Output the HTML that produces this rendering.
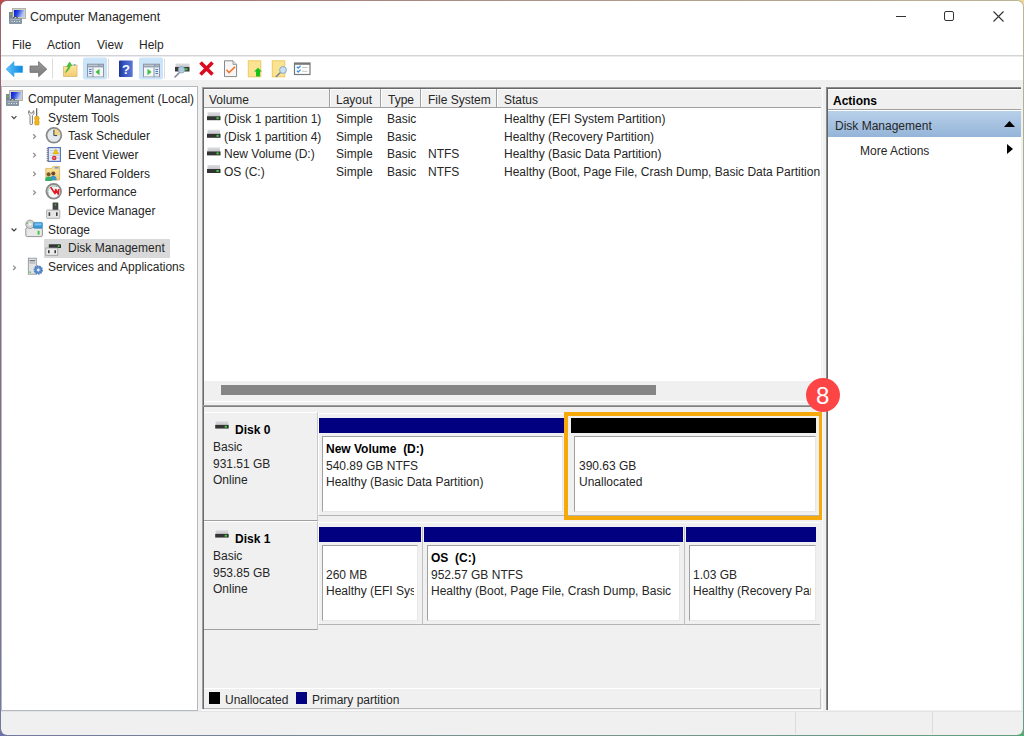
<!DOCTYPE html>
<html><head><meta charset="utf-8">
<style>
*{margin:0;padding:0;box-sizing:border-box}
html,body{width:1024px;height:736px;overflow:hidden}
body{position:relative;font-family:"Liberation Sans",sans-serif;font-size:12px;color:#262626;background:linear-gradient(to right,#c04848,#d0a080 50%,#f0d898)}
#bgr{position:absolute;left:0;top:0;width:1024px;height:736px;background:linear-gradient(to right,#7070a8,#80a088 50%,#50b070);-webkit-mask-image:linear-gradient(to bottom,transparent,#000);mask-image:linear-gradient(to bottom,transparent,#000)}
#win{position:absolute;left:0;top:0;width:1024px;height:736px;border-radius:7px;border:1px solid rgba(120,130,150,0.42);background:#f0f0f0;background-clip:padding-box}
.a{position:absolute;white-space:nowrap;line-height:14px}
.r{position:absolute}
.b{font-weight:bold;color:#000}
svg{position:absolute;overflow:visible}
</style></head><body>
<div id="bgr"></div>
<div id="win"></div>
<!-- title + menu -->
<div class="r" style="left:1px;top:1px;width:1022px;height:54px;background:#fff;border-radius:6px 6px 0 0"></div>
<div class="r" style="left:1px;top:55px;width:1022px;height:1px;background:#d4d4d8"></div>
<div class="r" style="left:1px;top:56px;width:1022px;height:1px;background:#ebebed"></div>
<div class="r" style="left:1px;top:57px;width:1022px;height:23px;background:#fff"></div>
<div class="a" style="left:30px;top:10px;font-size:12.4px">Computer Management</div>
<div class="a" style="left:12px;top:38px">File</div>
<div class="a" style="left:47px;top:38px">Action</div>
<div class="a" style="left:97px;top:38px">View</div>
<div class="a" style="left:139px;top:38px">Help</div>
<!-- window controls -->
<div class="r" style="left:896px;top:16px;width:10px;height:1px;background:#333"></div>
<div class="r" style="left:944px;top:11px;width:10px;height:10px;border:1px solid #333;border-radius:2px"></div>
<svg style="left:993px;top:11px" width="11" height="11"><path d="M0.5 0.5L10.5 10.5M10.5 0.5L0.5 10.5" stroke="#333" stroke-width="1.1"/></svg>

<!-- left pane -->
<div class="r" style="left:1px;top:86px;width:197px;height:625px;background:#fff;border:1px solid #b4b9c0"></div>
<div class="a" style="left:28px;top:92px">Computer Management (Local)</div>
<div class="a" style="left:48px;top:111px">System Tools</div>
<div class="a" style="left:68px;top:129px">Task Scheduler</div>
<div class="a" style="left:68px;top:148px">Event Viewer</div>
<div class="a" style="left:68px;top:167px">Shared Folders</div>
<div class="a" style="left:68px;top:185px">Performance</div>
<div class="a" style="left:68px;top:204px">Device Manager</div>
<div class="a" style="left:48px;top:223px">Storage</div>
<div class="r" style="left:44px;top:239px;width:126px;height:19px;background:#d9d9d9"></div>
<div class="a" style="left:68px;top:241px">Disk Management</div>
<div class="a" style="left:48px;top:260px">Services and Applications</div>

<!-- center list view -->
<div class="r" style="left:202px;top:87px;width:619px;height:622px;border-left:1px solid #a0a0a0;border-top:1px solid #a0a0a0"></div>
<div class="r" style="left:203px;top:88px;width:618px;height:621px;border-left:1px solid #696969;border-top:1px solid #696969;background:#fff"></div>
<!-- header -->
<div class="r" style="left:204px;top:89px;width:617px;height:19px;background:#f0f0f0;border-bottom:1px solid #a0a0a0"></div>
<div class="r" style="left:204px;top:89px;width:617px;height:1px;background:#fff"></div>
<div class="r" style="left:329px;top:89px;width:1px;height:18px;background:#a0a0a0"></div>
<div class="r" style="left:330px;top:89px;width:1px;height:18px;background:#fff"></div>
<div class="r" style="left:380px;top:89px;width:1px;height:18px;background:#a0a0a0"></div>
<div class="r" style="left:381px;top:89px;width:1px;height:18px;background:#fff"></div>
<div class="r" style="left:420px;top:89px;width:1px;height:18px;background:#a0a0a0"></div>
<div class="r" style="left:421px;top:89px;width:1px;height:18px;background:#fff"></div>
<div class="r" style="left:496px;top:89px;width:1px;height:18px;background:#a0a0a0"></div>
<div class="r" style="left:497px;top:89px;width:1px;height:18px;background:#fff"></div>
<div class="a" style="left:209px;top:93px">Volume</div>
<div class="a" style="left:336px;top:93px">Layout</div>
<div class="a" style="left:388px;top:93px">Type</div>
<div class="a" style="left:428px;top:93px">File System</div>
<div class="a" style="left:504px;top:93px">Status</div>
<!-- rows -->
<div class="a" style="left:224px;top:112px">(Disk 1 partition 1)</div>
<div class="a" style="left:224px;top:130px">(Disk 1 partition 4)</div>
<div class="a" style="left:224px;top:147px">New Volume (D:)</div>
<div class="a" style="left:224px;top:165px">OS (C:)</div>
<div class="a" style="left:336px;top:112px">Simple</div>
<div class="a" style="left:336px;top:130px">Simple</div>
<div class="a" style="left:336px;top:147px">Simple</div>
<div class="a" style="left:336px;top:165px">Simple</div>
<div class="a" style="left:387px;top:112px">Basic</div>
<div class="a" style="left:387px;top:130px">Basic</div>
<div class="a" style="left:387px;top:147px">Basic</div>
<div class="a" style="left:387px;top:165px">Basic</div>
<div class="a" style="left:428px;top:147px">NTFS</div>
<div class="a" style="left:428px;top:165px">NTFS</div>
<div class="a" style="left:504px;top:112px">Healthy (EFI System Partition)</div>
<div class="a" style="left:504px;top:130px">Healthy (Recovery Partition)</div>
<div class="a" style="left:504px;top:147px">Healthy (Basic Data Partition)</div>
<div class="r" style="left:504px;top:165px;width:316px;height:14px;overflow:hidden"><div class="a" style="left:0;top:0">Healthy (Boot, Page File, Crash Dump, Basic Data Partition)</div></div>
<!-- scrollbar -->
<div class="r" style="left:204px;top:381px;width:617px;height:20px;background:#f0f0f0"></div>
<div class="r" style="left:221px;top:385px;width:435px;height:10px;background:#858585"></div>
<!-- splitter -->
<div class="r" style="left:204px;top:401px;width:617px;height:4px;background:#f0f0f0;border-top:1px solid #fff"></div>
<div class="r" style="left:203px;top:405px;width:618px;height:1px;background:#a0a0a0"></div>
<div class="r" style="left:203px;top:406px;width:618px;height:1px;background:#808080"></div>
<div class="r" style="left:204px;top:407px;width:617px;height:302px;background:#f0f0f0"></div>


<!-- disk view -->
<!-- disk 0 label -->
<div class="r" style="left:204px;top:412px;width:114px;height:109px;background:#f0f0f0;border-top:1px solid #fff;border-right:1px solid #c8c8c8;border-bottom:1px solid #a0a0a0"></div>
<div class="a b" style="left:235px;top:423px">Disk 0</div>
<div class="a" style="left:213px;top:440px">Basic</div>
<div class="a" style="left:213px;top:457px">931.51 GB</div>
<div class="a" style="left:213px;top:473px">Online</div>
<!-- disk 0 partitions -->
<div class="r" style="left:318px;top:413px;width:502px;height:103px;background:#f0f0f0;border-top:1px solid #fff;border-left:1px solid #fff;border-bottom:1px solid #b4b4b4"></div>
<div class="r" style="left:319px;top:418px;width:246px;height:15px;background:#000080"></div>
<div class="r" style="left:322px;top:436px;width:241px;height:76px;background:#fff;border-left:1px solid #a0a0a0;border-top:1px solid #a0a0a0;border-right:1px solid #e8e8e8;border-bottom:1px solid #e8e8e8"></div>
<div class="a b" style="left:326px;top:442px">New Volume&nbsp; (D:)</div>
<div class="a" style="left:326px;top:459px">540.89 GB NTFS</div>
<div class="a" style="left:326px;top:475px">Healthy (Basic Data Partition)</div>
<div class="r" style="left:571px;top:418px;width:245px;height:15px;background:#000"></div>
<div class="r" style="left:574px;top:436px;width:242px;height:76px;background:#fff;border-left:1px solid #a0a0a0;border-top:1px solid #a0a0a0;border-right:1px solid #e8e8e8;border-bottom:1px solid #e8e8e8"></div>
<div class="a" style="left:579px;top:459px">390.63 GB</div>
<div class="a" style="left:579px;top:475px">Unallocated</div>
<div class="r" style="left:564px;top:412px;width:259px;height:108px;border:4px solid #f5a90a"></div>
<!-- disk 1 label -->
<div class="r" style="left:204px;top:521px;width:114px;height:109px;background:#f0f0f0;border-top:1px solid #fff;border-right:1px solid #c8c8c8;border-bottom:1px solid #a0a0a0"></div>
<div class="a b" style="left:235px;top:532px">Disk 1</div>
<div class="a" style="left:213px;top:549px">Basic</div>
<div class="a" style="left:213px;top:566px">953.85 GB</div>
<div class="a" style="left:213px;top:582px">Online</div>
<div class="r" style="left:318px;top:522px;width:502px;height:103px;background:#f0f0f0;border-top:1px solid #fff;border-left:1px solid #fff;border-bottom:1px solid #b4b4b4"></div>
<div class="r" style="left:319px;top:527px;width:102px;height:15px;background:#000080"></div>
<div class="r" style="left:322px;top:545px;width:96px;height:76px;background:#fff;border-left:1px solid #a0a0a0;border-top:1px solid #a0a0a0;border-right:1px solid #e8e8e8;border-bottom:1px solid #e8e8e8"></div>
<div class="r" style="left:326px;top:561px;width:88px;height:40px;overflow:hidden"><div class="a" style="left:0;top:7px">260 MB</div><div class="a" style="left:0;top:23px">Healthy (EFI System Partition)</div></div>
<div class="r" style="left:422px;top:527px;width:1px;height:98px;background:#c0c0c0"></div>
<div class="r" style="left:424px;top:527px;width:259px;height:15px;background:#000080"></div>
<div class="r" style="left:427px;top:545px;width:253px;height:76px;background:#fff;border-left:1px solid #a0a0a0;border-top:1px solid #a0a0a0;border-right:1px solid #e8e8e8;border-bottom:1px solid #e8e8e8"></div>
<div class="a b" style="left:431px;top:551px">OS&nbsp; (C:)</div>
<div class="a" style="left:431px;top:568px">952.57 GB NTFS</div>
<div class="r" style="left:431px;top:584px;width:242px;height:14px;overflow:hidden"><div class="a" style="left:0;top:0">Healthy (Boot, Page File, Crash Dump, Basic Data Partition)</div></div>
<div class="r" style="left:684px;top:527px;width:1px;height:98px;background:#c0c0c0"></div>
<div class="r" style="left:686px;top:527px;width:130px;height:15px;background:#000080"></div>
<div class="r" style="left:689px;top:545px;width:127px;height:76px;background:#fff;border-left:1px solid #a0a0a0;border-top:1px solid #a0a0a0;border-right:1px solid #e8e8e8;border-bottom:1px solid #e8e8e8"></div>
<div class="r" style="left:693px;top:561px;width:118px;height:40px;overflow:hidden"><div class="a" style="left:0;top:7px">1.03 GB</div><div class="a" style="left:0;top:23px">Healthy (Recovery Partition)</div></div>
<!-- legend -->
<div class="r" style="left:204px;top:688px;width:617px;height:21px;background:#f0f0f0;border-top:1px solid #fff;border-right:1px solid #c4c4c4;border-bottom:1px solid #b8b8b8"></div>
<div class="r" style="left:209px;top:692px;width:11px;height:12px;background:#000"></div>
<div class="a" style="left:225px;top:693px">Unallocated</div>
<div class="r" style="left:296px;top:692px;width:11px;height:12px;background:#000080"></div>
<div class="a" style="left:312px;top:693px">Primary partition</div>
<div class="r" style="left:822px;top:86px;width:1px;height:625px;background:#fafafa"></div>
<div class="r" style="left:201px;top:710px;width:622px;height:1px;background:#fafafa"></div>
<!-- actions pane -->
<div class="r" style="left:826px;top:87px;width:195px;height:623px;background:#fff;border-left:1px solid #8c8c8c;border-top:1px solid #8c8c8c;box-shadow:inset 1px 1px 0 #646464"></div>
<div class="r" style="left:828px;top:89px;width:193px;height:21px;background:#f0f0f0;border-top:1px solid #fff;border-bottom:1px solid #a0a0a0"></div>
<div class="r" style="left:828px;top:111px;width:193px;height:26px;background:linear-gradient(#b8d0ea,#94b4d8)"></div>
<div class="a b" style="left:833px;top:94px">Actions</div>
<div class="a" style="left:835px;top:119px">Disk Management</div>
<div class="a" style="left:860px;top:144px">More Actions</div>
<svg style="left:1004px;top:121px" width="11" height="6"><path d="M0 6L5.5 0L11 6Z" fill="#000"/></svg>
<svg style="left:1007px;top:144px" width="6" height="10"><path d="M0 0L6 5L0 10Z" fill="#000"/></svg>

<!-- status bar -->
<div class="r" style="left:1px;top:711px;width:1022px;height:1px;background:#e4e4e4"></div>
<div class="r" style="left:795px;top:712px;width:1px;height:22px;background:#dcdcdc"></div>
<div class="r" style="left:932px;top:712px;width:1px;height:22px;background:#dcdcdc"></div>
<!-- ICONS -->
<svg style="left:0;top:0;pointer-events:none" width="1024" height="736" viewBox="0 0 1024 736">
<defs>
<linearGradient id="scr" x1="0" y1="0" x2="1" y2="0.3"><stop offset="0" stop-color="#0818c8"/><stop offset="0.45" stop-color="#2a48e0"/><stop offset="1" stop-color="#b8c8f4"/></linearGradient>
<linearGradient id="blu" x1="0" y1="0" x2="1" y2="0"><stop offset="0" stop-color="#60c4fa"/><stop offset="1" stop-color="#0a86e0"/></linearGradient>
<linearGradient id="gry" x1="0" y1="0" x2="0" y2="1"><stop offset="0" stop-color="#9a9a9a"/><stop offset="1" stop-color="#7a7a7a"/></linearGradient>
<linearGradient id="hlp" x1="0" y1="0" x2="1" y2="0"><stop offset="0" stop-color="#1c3490"/><stop offset="0.25" stop-color="#2e4cb8"/><stop offset="1" stop-color="#5a7ad8"/></linearGradient>
<linearGradient id="fld" x1="0" y1="0" x2="0" y2="1"><stop offset="0" stop-color="#fde7a0"/><stop offset="1" stop-color="#f2cc70"/></linearGradient>
<linearGradient id="drv" x1="0" y1="0" x2="0" y2="1"><stop offset="0" stop-color="#dcdee2"/><stop offset="1" stop-color="#c4c6ca"/></linearGradient>
<g id="cmp">
 <rect x="3.5" y="0.5" width="13" height="10" fill="#cfcfc6" stroke="#b4b4aa"/>
 <rect x="5" y="2" width="10" height="7" fill="url(#scr)"/>
 <rect x="0" y="4" width="3.5" height="7" fill="#7c8690"/>
 <rect x="1" y="5.5" width="1.5" height="1.5" fill="#60d040"/>
 <rect x="0" y="10" width="13" height="6" rx="0.8" fill="#8696a4"/>
 <rect x="1.5" y="11" width="10" height="1" fill="#a8b4c0"/>
 <rect x="2.5" y="13" width="1" height="1" fill="#e8eef2"/><rect x="5" y="13" width="1" height="1" fill="#e8eef2"/><rect x="7.5" y="13" width="1" height="1" fill="#e8eef2"/><rect x="10" y="13" width="1" height="1" fill="#e8eef2"/>
 <path d="M4 10L6.5 8.5L9 10" fill="none" stroke="#404850" stroke-width="1"/>
</g>
<g id="drvi">
 <rect x="0.5" y="0" width="12.5" height="4" fill="url(#drv)"/>
 <rect x="0" y="4" width="13.5" height="4" fill="#333"/>
 <rect x="9.5" y="5" width="2.2" height="2" fill="#3ad43a"/>
</g>
<g id="wnd">
 <rect x="0" y="0" width="17" height="13.5" fill="#8a96a6"/>
 <rect x="1" y="1" width="10" height="1.2" fill="#c4ccd6"/>
 <rect x="12" y="1" width="4" height="1.2" fill="#aeb8c4"/>
 <rect x="1" y="3" width="15" height="1" fill="#b8c2cc"/>
</g>
</defs>

<!-- title icon -->
<use href="#cmp" x="9" y="8"/>

<!-- toolbar -->
<path d="M6 69.2L14 61.6V66H22.6V72.4H14V76.8Z" fill="url(#blu)" stroke="#3aa6ec" stroke-width="0.6" stroke-linejoin="round"/>
<path d="M46.8 69.2L38.6 61.6V66H30V72.4H38.6V76.8Z" fill="url(#gry)" stroke="#707070" stroke-width="0.8" stroke-linejoin="round"/>
<rect x="52" y="58.5" width="1" height="20" fill="#dcdcdc"/>
<!-- folder up -->
<path d="M63.5 66.5H70.5L72 65H77V76.5H63.5Z" fill="url(#fld)" stroke="#dab868" stroke-width="0.8"/>
<path d="M65.5 72.5C66.5 70 68 68.5 68.5 66.2L66.8 66.4L69.6 62L72 65.6L70.2 65.8C69.8 68.6 68 71 65.5 72.5Z" fill="#3cc83c" stroke="#28a828" stroke-width="0.5"/>
<circle cx="74.6" cy="65" r="1" fill="#78a8d8"/>
<rect x="83" y="57.5" width="24" height="22" rx="2" fill="#cce4f7"/>
<use href="#wnd" x="87" y="63.7"/>
<rect x="88" y="67.5" width="4.5" height="9" fill="#e4eaf0"/>
<rect x="89" y="69" width="2.5" height="1" fill="#4a7ac8"/><rect x="89" y="71" width="2.5" height="1" fill="#4a7ac8"/><rect x="89" y="73" width="2.5" height="1" fill="#4a7ac8"/>
<rect x="93.5" y="67.5" width="9.5" height="9" fill="#f4f6f8"/>
<path d="M95.5 72L99.5 68.8V75.2Z" fill="#3cbf3c"/>
<rect x="108" y="58.5" width="1" height="20" fill="#dcdcdc"/>
<!-- help -->
<rect x="119" y="60.5" width="13.7" height="16.5" rx="0.8" fill="url(#hlp)"/>
<text x="126" y="74.2" font-family="Liberation Sans" font-weight="bold" font-size="13" fill="#fff" text-anchor="middle">?</text>
<rect x="139" y="57.5" width="24" height="22" rx="2" fill="#cce4f7"/>
<use href="#wnd" x="143" y="63.7"/>
<rect x="144" y="67.5" width="9.5" height="9" fill="#f4f6f8"/>
<path d="M147.5 68.8L151.5 72L147.5 75.2Z" fill="#3cbf3c"/>
<rect x="154.5" y="67.5" width="4.5" height="9" fill="#e4eaf0"/>
<rect x="155.5" y="69" width="2.5" height="1" fill="#4a7ac8"/><rect x="155.5" y="71" width="2.5" height="1" fill="#4a7ac8"/><rect x="155.5" y="73" width="2.5" height="1" fill="#4a7ac8"/>
<rect x="164" y="58.5" width="1" height="20" fill="#dcdcdc"/>
<!-- connect -->
<rect x="175.5" y="63.5" width="14" height="3.6" fill="url(#drv)"/>
<rect x="175" y="67" width="14.5" height="4.5" fill="#3a3a3a"/>
<rect x="185" y="68.3" width="2.5" height="2" fill="#3ad43a"/>
<line x1="175" y1="77" x2="179.5" y2="72.5" stroke="#7a8898" stroke-width="1.6" stroke-linecap="round"/>
<circle cx="181.5" cy="69.8" r="3.2" fill="#b8d8f0" fill-opacity="0.9" stroke="#8aa0b8" stroke-width="0.9"/>
<!-- red X -->
<path d="M200.5 62.5L212.5 74.5M212.5 62.5L200.5 74.5" stroke="#dc0a1c" stroke-width="3.6" stroke-linecap="butt"/>
<!-- properties doc -->
<path d="M224.5 60.8H233L236.6 64.4V76.6H224.5Z" fill="#f6f6f6" stroke="#8a8a8a" stroke-width="1"/>
<path d="M233 60.8V64.4H236.6" fill="#e0e0e0" stroke="#8a8a8a" stroke-width="0.8"/>
<path d="M226.5 69.8L229 72.5L235 66.8" fill="none" stroke="#f0782c" stroke-width="1.6"/>
<!-- yellow doc up -->
<rect x="248.3" y="60.8" width="12.5" height="16" fill="#fbe394" stroke="#f0c860" stroke-width="1"/>
<path d="M254 71.5L258 67.8L262 71.5H260V76.5H256V71.5Z" fill="#1cc01c"/>
<!-- yellow doc magnifier -->
<rect x="272.3" y="60.8" width="12.5" height="16" fill="#fbe394" stroke="#f0c860" stroke-width="1"/>
<line x1="276.3" y1="76.6" x2="280.5" y2="72.4" stroke="#7a8088" stroke-width="1.4" stroke-linecap="round"/>
<circle cx="283" cy="70" r="3.4" fill="#c8e2f4" stroke="#8ca8c0" stroke-width="1"/>
<!-- checklist -->
<rect x="294.5" y="63" width="15.5" height="11.5" fill="#fff" stroke="#787878" stroke-width="1.2"/>
<rect x="294.5" y="63" width="15.5" height="1.8" fill="#787878"/>
<path d="M296.8 66.8L298.2 68.2L300.6 65.8M296.8 70.6L298.2 72L300.6 69.6" fill="none" stroke="#3a90e0" stroke-width="1.3"/>
<rect x="302" y="67" width="5.5" height="1" fill="#c8c8c8"/><rect x="302" y="70.8" width="5.5" height="1" fill="#c8c8c8"/>

<!-- tree -->
<use href="#cmp" x="6" y="90"/>
<path d="M11.6 116.2L14 118.7L16.4 116.2" fill="none" stroke="#404040" stroke-width="1.2"/>
<path d="M11.6 228.5L14 231L16.4 228.5" fill="none" stroke="#404040" stroke-width="1.2"/>
<path d="M33.2 134.3L35.5 136.5L33.2 138.7" fill="none" stroke="#8c8c8c" stroke-width="1.2"/>
<path d="M33.2 153L35.5 155.2L33.2 157.4" fill="none" stroke="#8c8c8c" stroke-width="1.2"/>
<path d="M33.2 171.7L35.5 173.9L33.2 176.1" fill="none" stroke="#8c8c8c" stroke-width="1.2"/>
<path d="M33.2 190.4L35.5 192.6L33.2 194.8" fill="none" stroke="#8c8c8c" stroke-width="1.2"/>
<path d="M13.2 265.6L15.5 267.8L13.2 270" fill="none" stroke="#8c8c8c" stroke-width="1.2"/>
<!-- tools -->
<path d="M29 110.5C28 112.5 28.5 114.5 30 115.5V124C30 124.8 32.5 124.8 32.5 124V115.5C34 114.5 34.5 112.5 33.5 110.5L32.5 113H30Z" fill="#f0f0f0" stroke="#7a7a7a" stroke-width="0.9"/>
<rect x="36" y="108.2" width="1.3" height="8" fill="#6a6a6a"/>
<path d="M35 116.5H38.5L39.3 118.5L38.6 120.2L39.3 122.5L38.6 125H35.2L34.5 122.5L35.2 120.2L34.5 118.5Z" fill="#f0b418" stroke="#c88a00" stroke-width="0.5"/>
<!-- clock -->
<circle cx="53.9" cy="135.3" r="7.4" fill="#e4eaf0" stroke="#8a8a8a" stroke-width="1.8"/>
<path d="M53.9 135.3V128.8A6.5 6.5 0 0 1 60.4 135.3Z" fill="#f0d488"/>
<path d="M53.9 129.8V135.6H57.2" fill="none" stroke="#34404c" stroke-width="1"/>
<!-- event viewer -->
<rect x="47.6" y="147" width="13.4" height="15" fill="#5a76bc"/>
<rect x="48.8" y="148.2" width="11" height="12.6" fill="#e8eef8"/>
<path d="M49.5 150.5H59.3M49.5 153H59.3M49.5 155.5H59.3M49.5 158H59.3" stroke="#b0c2dc" stroke-width="0.6"/>
<path d="M46.6 148.6H48.4M46.6 150.6H48.4M46.6 152.6H48.4M46.6 154.6H48.4M46.6 156.6H48.4M46.6 158.6H48.4M46.6 160.6H48.4" stroke="#707070" stroke-width="0.8"/>
<path d="M55.8 149L58.6 154H53Z" fill="#f4c400" stroke="#c89a00" stroke-width="0.5"/>
<circle cx="54.2" cy="158" r="2.3" fill="#d83040"/>
<rect x="53.4" y="157.6" width="1.6" height="0.8" fill="#fff"/>
<!-- shared folders -->
<path d="M45.8 168.4H52L53 166.4H59.6V180H45.8Z" fill="url(#fld)" stroke="#d4b060" stroke-width="0.8"/>
<rect x="54.6" y="167" width="4" height="1.6" fill="#70a0d0"/>
<circle cx="53.3" cy="173.6" r="2" fill="#6a4a30"/>
<path d="M50 180.2C50 177 51.2 175.8 53.3 175.8C55.4 175.8 56.6 177 56.6 180.2Z" fill="#3a94d0"/>
<circle cx="48.6" cy="174.2" r="2" fill="#7a5430"/>
<path d="M45.2 181C45.2 177.8 46.5 176.6 48.6 176.6C50.7 176.6 52 177.8 52 181Z" fill="#30b068"/>
<!-- performance -->
<circle cx="53.7" cy="191.3" r="7.3" fill="#f6f6f6" stroke="#8a8a8a" stroke-width="1.9"/>
<path d="M48.6 194.5A5.4 5.4 0 0 1 50.5 187.2M52.6 186.2A5.4 5.4 0 0 1 57 186.8" fill="none" stroke="#3a9a6a" stroke-width="1" stroke-dasharray="1 0.7"/>
<path d="M50.6 187L55 193.6L55.8 189.6L58.2 194L58.8 189" fill="none" stroke="#e01a22" stroke-width="1.7" stroke-linejoin="round"/>
<!-- device manager -->
<rect x="52.6" y="202.4" width="5.7" height="7.6" rx="0.5" fill="#454545"/>
<rect x="54.8" y="204.2" width="1.3" height="1.3" fill="#40d040"/>
<rect x="46.6" y="210" width="13.2" height="8.3" rx="0.5" fill="#e6e6e6" stroke="#a0a0a0" stroke-width="0.8"/>
<rect x="48.6" y="212.3" width="1.6" height="3.6" fill="#3a3a3a"/><rect x="56" y="212.3" width="1.6" height="3.6" fill="#3a3a3a"/>
<!-- storage -->
<rect x="25.8" y="227.6" width="16.6" height="9" rx="1.6" fill="#e8e8e8" stroke="#8a8a8a" stroke-width="0.9"/>
<rect x="37.6" y="230.8" width="2" height="3.8" fill="#40c840"/>
<circle cx="30" cy="224.3" r="4.2" fill="#d4d4d4" stroke="#909090" stroke-width="0.8"/>
<circle cx="30" cy="224.3" r="1.4" fill="#f4f4f4"/>
<rect x="26.5" y="222.5" width="1.4" height="1.4" fill="#50c050"/>
<rect x="33.6" y="222.4" width="8.8" height="5.8" rx="0.8" fill="#3a9ad8" stroke="#2a78b0" stroke-width="0.6"/>
<rect x="34.6" y="223.4" width="6.8" height="2" fill="#7cc2f0"/>
<!-- disk management -->
<rect x="49" y="240.8" width="11.4" height="3.4" fill="#d8dade"/>
<rect x="48.8" y="244.2" width="12.2" height="3.8" rx="0.6" fill="#353535"/>
<rect x="57.8" y="245.2" width="1.8" height="1.8" fill="#40d040"/>
<rect x="45.8" y="248" width="12" height="7.3" fill="#ececec" stroke="#9a9a9a" stroke-width="0.8"/>
<rect x="48" y="250.2" width="1.6" height="3" fill="#3a3a3a"/><rect x="54.4" y="250.2" width="1.6" height="3" fill="#3a3a3a"/>
<!-- services -->
<rect x="28.3" y="258.2" width="8" height="16" fill="#e0e2e4" stroke="#8a8c90" stroke-width="0.8"/>
<rect x="29.5" y="260" width="5.6" height="1.3" fill="#70787e"/>
<rect x="29.5" y="262.5" width="5.6" height="1" fill="#a0a6ac"/>
<rect x="29.6" y="271.5" width="1.4" height="1.4" fill="#40c040"/>
<circle cx="38.3" cy="270" r="3.8" fill="#5a8ed0" stroke="#4a7ab8" stroke-width="1.8" stroke-dasharray="1.4 0.9"/>
<circle cx="38.3" cy="270" r="1.4" fill="#e8f0f8"/>

<!-- list drives -->
<use href="#drvi" x="207" y="112.2"/>
<use href="#drvi" x="207" y="129.8"/>
<use href="#drvi" x="207" y="147.4"/>
<use href="#drvi" x="207" y="165"/>
<!-- disk view drives -->
<g transform="translate(215.2 421.2) scale(1 0.92)"><use href="#drvi"/></g>
<g transform="translate(215.2 530.2) scale(1 0.92)"><use href="#drvi"/></g>
</svg>

<!-- /ICONS -->
<!-- badge -->
<div class="r" style="left:806px;top:378px;width:34px;height:34px;border-radius:50%;background:#fd4546"></div>
<div class="a" style="left:816px;top:382px;font-size:24px;line-height:28px;color:#fff">8</div>

</body></html>
